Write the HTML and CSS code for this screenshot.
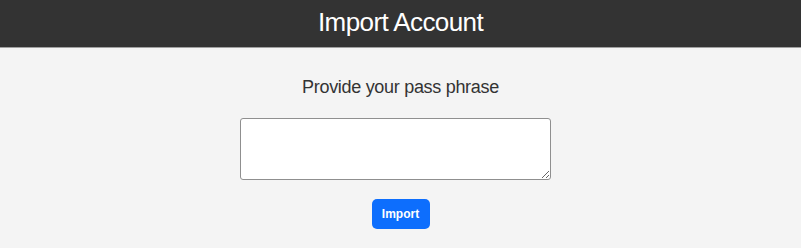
FILE: index.html
```html
<!DOCTYPE html>
<html>
<head>
<meta charset="utf-8">
<link rel="stylesheet" href="styles.css">
</head>
<body>
<header class="topbar"><h1 class="title">Import Account</h1></header>
<main class="content">
  <p class="prompt">Provide your pass phrase</p>
  <textarea class="phrase"></textarea>
  <button class="btn">Import</button>
</main>
</body>
</html>
```
FILE: styles.css
```css
html, body { margin: 0; padding: 0; }
body {
  background: #f4f4f4;
  font-family: "Liberation Sans", Arial, sans-serif;
  width: 801px;
  height: 248px;
  overflow: hidden;
}
.topbar {
  background: #333333;
  height: 47px;
  border-bottom: 1px solid #a0a0a0;
  display: flex;
  align-items: center;
  justify-content: center;
}
.title {
  margin: 0;
  color: #ffffff;
  font-weight: normal;
  font-size: 26px;
  letter-spacing: -0.6px;
  line-height: 1;
  transform: translateY(-2px);
}
.content {
  display: flex;
  flex-direction: column;
  align-items: center;
}
.prompt {
  margin: 29px 0 0 0;
  font-size: 18px;
  letter-spacing: -0.3px;
  line-height: 20px;
  color: #333333;
}
.phrase {
  margin: 21px 10px 0 0;
  width: 307px;
  height: 58px;
  padding: 1px;
  border: 1px solid #8f8f8f;
  border-radius: 3px;
  background: #ffffff;
  box-sizing: content-box;
}
.btn {
  margin-top: 19px;
  width: 58px;
  height: 30px;
  border: none;
  border-radius: 5px;
  background: #0d6efd;
  color: #ffffff;
  font-family: "Liberation Sans", Arial, sans-serif;
  font-weight: bold;
  font-size: 12px;
  padding: 0;
}
```
